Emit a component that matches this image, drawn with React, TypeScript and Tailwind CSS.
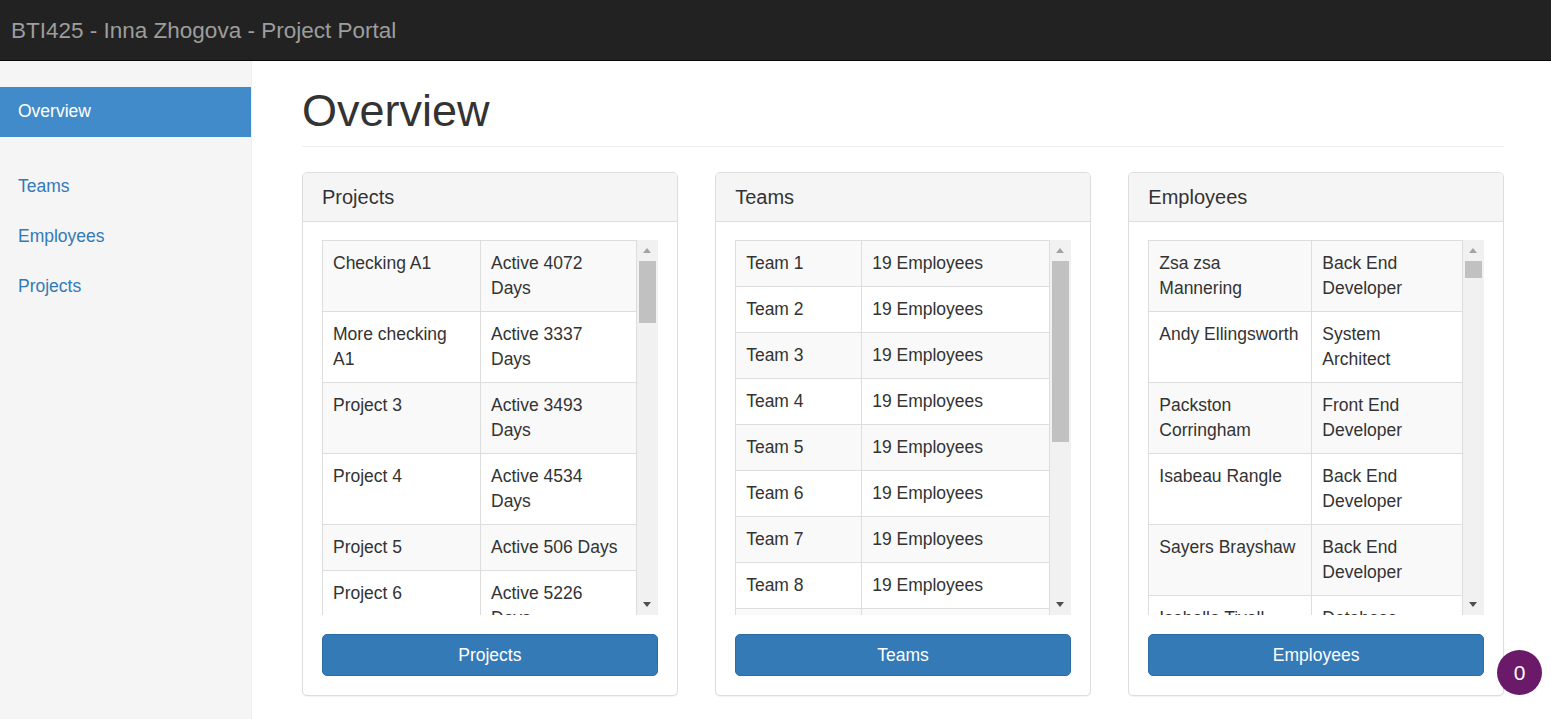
import React from 'react';

type Row = [string, string];

const projects: Row[] = [
  ['Checking A1', 'Active 4072 Days'],
  ['More checking A1', 'Active 3337 Days'],
  ['Project 3', 'Active 3493 Days'],
  ['Project 4', 'Active 4534 Days'],
  ['Project 5', 'Active 506 Days'],
  ['Project 6', 'Active 5226 Days'],
  ['Project 7', 'Active 2210 Days'],
];

const teams: Row[] = Array.from({ length: 10 }, (_, i) => [`Team ${i + 1}`, '19 Employees']);

const employees: Row[] = [
  ['Zsa zsa Mannering', 'Back End Developer'],
  ['Andy Ellingsworth', 'System Architect'],
  ['Packston Corringham', 'Front End Developer'],
  ['Isabeau Rangle', 'Back End Developer'],
  ['Sayers Brayshaw', 'Back End Developer'],
  ['Isabella Tivell', 'Database Administrator'],
];

const FakeScrollbar: React.FC<{ thumb: number }> = ({ thumb }) => (
  <div className="flex w-[21px] shrink-0 flex-col bg-[#f1f1f1]">
    <div className="flex h-[21px] items-center justify-center">
      <div className="h-0 w-0 border-x-[4.5px] border-b-[5px] border-x-transparent border-b-[#a3a3a3]" />
    </div>
    <div className="flex-1 px-[2px]">
      <div className="w-full bg-[#c1c1c1]" style={{ height: thumb }} />
    </div>
    <div className="flex h-[21px] items-center justify-center">
      <div className="h-0 w-0 border-x-[4.5px] border-t-[5px] border-x-transparent border-t-[#505050]" />
    </div>
  </div>
);

interface PanelProps {
  title: string;
  rows: Row[];
  firstCol: string;
  thumb: number;
}

const Panel: React.FC<PanelProps> = ({ title, rows, firstCol, thumb }) => (
  <div className="rounded-[5px] border border-[#ddd] bg-white shadow-[0_1px_1px_rgba(0,0,0,0.05)]">
    <div className="rounded-t-[4px] border-b border-[#ddd] bg-[#f5f5f5] px-[19px] pb-[13px] pt-[12.5px] text-[20px] leading-[22px] text-[#333]">
      {title}
    </div>
    <div className="px-[19px] pb-[19px] pt-[18.5px]">
      <div className="flex h-[375px]">
        <div className="flex-1 overflow-hidden">
          <table className="w-full table-fixed border-collapse border border-[#ddd] text-[17.5px] leading-[25px] text-[#333]">
            <colgroup>
              <col className={firstCol} />
              <col />
            </colgroup>
            <tbody>
              {rows.map(([a, b], i) => (
                <tr key={i} className={i % 2 === 0 ? 'bg-[#f9f9f9]' : 'bg-white'}>
                  <td className="border border-[#ddd] p-[10px] align-top">{a}</td>
                  <td className="border border-[#ddd] p-[10px] align-top">{b}</td>
                </tr>
              ))}
            </tbody>
          </table>
        </div>
        <FakeScrollbar thumb={thumb} />
      </div>
      <button className="mt-[19px] h-[42px] w-full rounded-[5px] border border-[#2e6da4] bg-[#337ab7] text-[17.5px] leading-[25px] text-white">
        {title}
      </button>
    </div>
  </div>
);

export default function App() {
  return (
    <div className="flex min-h-screen flex-col bg-white font-['Liberation_Sans',Arial,sans-serif]">
      <nav className="flex h-[61px] shrink-0 items-center border-b border-[#080808] bg-[#222] pl-[11px]">
        <span className="text-[22.5px] leading-[25px] text-[#9d9d9d]">BTI425 - Inna Zhogova - Project Portal</span>
      </nav>
      <div className="flex flex-1">
        <aside className="w-[252px] shrink-0 border-r border-[#eee] bg-[#f5f5f5] pt-[25.5px]">
          <ul className="mb-[24.5px]">
            <li className="bg-[#428bca] px-[18px] py-[12.5px] text-[17.5px] leading-[25px] text-white">Overview</li>
          </ul>
          <ul className="text-[17.5px] leading-[25px] text-[#337ab7]">
            <li className="px-[18px] py-[12.5px]">Teams</li>
            <li className="px-[18px] py-[12.5px]">Employees</li>
            <li className="px-[18px] py-[12.5px]">Projects</li>
          </ul>
        </aside>
        <main className="flex-1 pl-[50px] pr-[47px] pt-[24.5px]">
          <h1 className="border-b border-[#eee] pb-[11px] text-[45px] leading-[49.5px] font-normal text-[#333]">Overview</h1>
          <div className="mt-[25px] grid grid-cols-3 gap-[37.5px]">
            <Panel title="Projects" rows={projects} firstCol="w-[158px]" thumb={62} />
            <Panel title="Teams" rows={teams} firstCol="w-[126px]" thumb={181} />
            <Panel title="Employees" rows={employees} firstCol="w-[163px]" thumb={17} />
          </div>
        </main>
      </div>
      <div className="fixed bottom-[24px] right-[9px] flex h-[45px] w-[45px] items-center justify-center rounded-full bg-[#6b1a6a] text-[21px] text-white">
        0
      </div>
    </div>
  );
}
